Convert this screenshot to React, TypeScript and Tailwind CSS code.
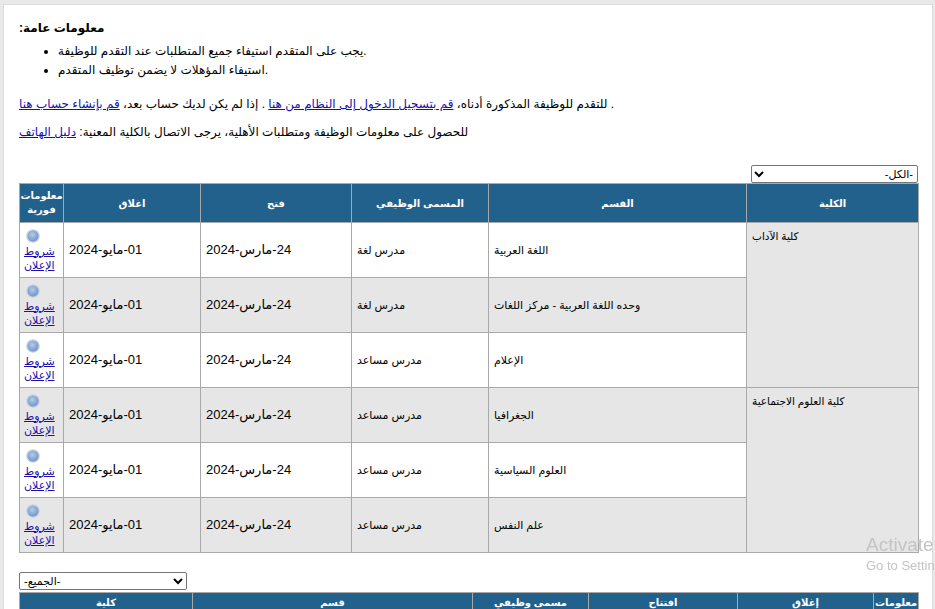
import React from "react";

type Job = {
  college?: string;
  span?: number;
  dept: string;
  title: string;
};

const jobs: Job[] = [
  { college: "كلية الآداب", span: 3, dept: "اللغة العربية", title: "مدرس لغة" },
  { dept: "وحده اللغة العربية - مركز اللغات", title: "مدرس لغة" },
  { dept: "الإعلام", title: "مدرس مساعد" },
  { college: "كلية العلوم الاجتماعية", span: 3, dept: "الجغرافيا", title: "مدرس مساعد" },
  { dept: "العلوم السياسية", title: "مدرس مساعد" },
  { dept: "علم النفس", title: "مدرس مساعد" },
];

function RadioDot() {
  return (
    <svg width="14" height="14" viewBox="0 0 14 14" className="block">
      <defs>
        <radialGradient id="rd" cx="45%" cy="40%" r="60%">
          <stop offset="0%" stopColor="#b4cbeb" />
          <stop offset="100%" stopColor="#6b90c6" />
        </radialGradient>
      </defs>
      <circle cx="7" cy="7" r="6.2" fill="url(#rd)" stroke="#ccd3de" strokeWidth="1.3" />
    </svg>
  );
}

const link = "text-[#1a0dab] underline";
const th = "border border-[#a9a9a9] bg-[#23618d] text-center align-middle text-[10px] font-bold text-white";
const td = "border border-[#a9a9a9] px-[5px] text-left align-middle";

export default function App() {
  return (
    <div
      className="h-screen overflow-hidden bg-[#e9e9e9] pt-[4px] pl-[3px] pr-[2px]"
      style={{ fontFamily: '"Liberation Sans", "DejaVu Sans", sans-serif' }}
    >
      <div className="min-h-full border border-[#dcdcdc] bg-white px-[15px] pt-[14px] text-[12px] text-black">
        {/* General info */}
        <p className="flex font-bold leading-[18px]">
          <span>:</span>
          <span>معلومات عامة</span>
        </p>
        <ul className="mt-[5px] list-disc pl-[39px] leading-[19px]">
          <li>يجب على المتقدم استيفاء جميع المتطلبات عند التقدم للوظيفة.</li>
          <li>استيفاء المؤهلات لا يضمن توظيف المتقدم.</li>
        </ul>

        <p className="mt-[15px] leading-[18px]">
          للتقدم للوظيفة المذكورة أدناه، <a href="#" className={link}>قم بتسجيل الدخول إلى النظام من هنا</a> . إذا لم يكن لديك حساب بعد، <a href="#" className={link}>قم بإنشاء حساب هنا</a> .
        </p>
        <p className="mt-[10px] leading-[18px]">
          للحصول على معلومات الوظيفة ومتطلبات الأهلية، يرجى الاتصال بالكلية المعنية: <a href="#" className={link}>دليل الهاتف</a>
        </p>

        {/* College filter */}
        <div className="mt-[24px] flex w-[899px] justify-end">
          <select
            dir="rtl"
            className="h-[18px] w-[167px] rounded-[2px] border border-[#767676] bg-white text-[11px]"
          >
            <option>-الكل-</option>
          </select>
        </div>

        {/* Jobs table */}
        <table dir="rtl" className="w-[899px] table-fixed border-collapse border border-[#a9a9a9]">
          <colgroup>
            <col className="w-[172px]" />
            <col className="w-[258px]" />
            <col className="w-[137px]" />
            <col className="w-[151px]" />
            <col className="w-[137px]" />
            <col className="w-[44px]" />
          </colgroup>
          <thead>
            <tr className="h-[39px]">
              <th className={th}>الكلية</th>
              <th className={th}>القسم</th>
              <th className={th}>المسمى الوظيفي</th>
              <th className={th}>فتح</th>
              <th className={th}>اغلاق</th>
              <th className={`${th} leading-[14px]`}>
                معلومات
                <br />
                فورية
              </th>
            </tr>
          </thead>
          <tbody>
            {jobs.map((j, i) => (
              <tr key={i} className={`h-[55px] ${i % 2 ? "bg-[#e6e6e6]" : "bg-white"}`}>
                {j.college && (
                  <td
                    rowSpan={j.span}
                    className="border border-[#a9a9a9] bg-[#e6e6e6] px-[5px] pt-[6px] text-left align-top text-[10.5px]"
                  >
                    {j.college}
                  </td>
                )}
                <td className={`${td} text-[11px]`}>{j.dept}</td>
                <td className={`${td} text-[11px]`}>{j.title}</td>
                <td className={`${td} text-[13px]`}>24-مارس-2024</td>
                <td className={`${td} text-[13px]`}>01-مايو-2024</td>
                <td className="border border-[#a9a9a9] px-[4px] py-[4px] text-left align-middle text-[11px] leading-[14px]">
                  <div className="flex flex-col items-end">
                    <span className="mb-[1px] ml-[2px] mr-auto">
                      <RadioDot />
                    </span>
                    <a href="#" className={link}>
                      شروط الإعلان
                    </a>
                  </div>
                </td>
              </tr>
            ))}
          </tbody>
        </table>

        {/* Second filter */}
        <div className="mt-[19px]">
          <select className="h-[18px] w-[168px] rounded-[2px] border border-[#767676] bg-white text-[11px]">
            <option>-الجميع-</option>
          </select>
        </div>

        <table className="mt-[2px] w-[899px] table-fixed border-collapse border border-[#a9a9a9]">
          <colgroup>
            <col className="w-[173px]" />
            <col className="w-[280px]" />
            <col className="w-[116px]" />
            <col className="w-[149px]" />
            <col className="w-[136px]" />
            <col className="w-[45px]" />
          </colgroup>
          <thead>
            <tr className="h-[20px]">
              <th className={th}>كلية</th>
              <th className={th}>قسم</th>
              <th className={th}>مسمى وظيفي</th>
              <th className={th}>افتتاح</th>
              <th className={th}>إغلاق</th>
              <th className={th}>معلومات</th>
            </tr>
          </thead>
        </table>
      </div>

      {/* Windows activation watermark */}
      <div className="pointer-events-none fixed left-[866px] top-[533px] whitespace-nowrap text-[#c4c4c4]">
        <div className="text-[19px] leading-[24px]">Activate Windows</div>
        <div className="text-[13px] leading-[18px]">Go to Settings to activate Windows.</div>
      </div>
    </div>
  );
}
